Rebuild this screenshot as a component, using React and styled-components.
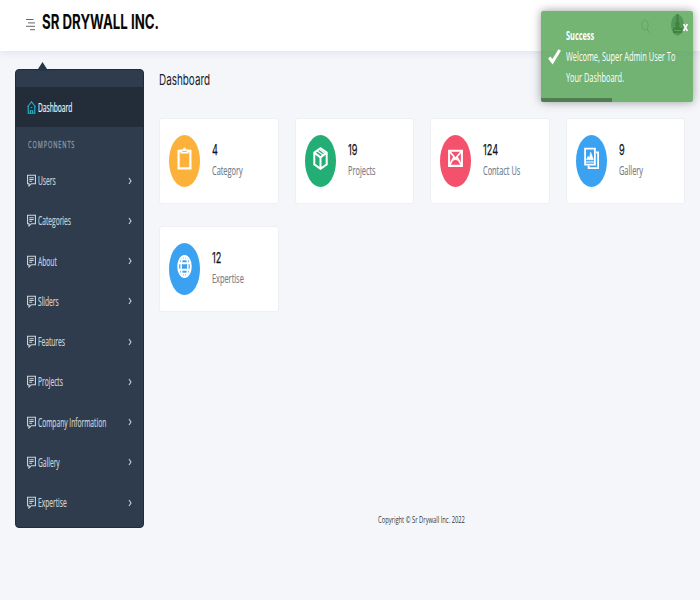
import React from 'react';
import styled, { createGlobalStyle } from 'styled-components';

const Global = createGlobalStyle`
  * { box-sizing: border-box; }
  body { margin: 0; background: #f4f6fa; font-family: "Open Sans", "Noto Sans", sans-serif; overflow: hidden; }
  svg { display: block; flex: none; }
`;

const Page = styled.div`
  width: 700px;
  height: 600px;
  position: relative;
  overflow: hidden;
  background: #f4f6fa;
`;

const Header = styled.header`
  height: 51px;
  display: flex;
  align-items: flex-start;
  padding: 0 16px 0 26px;
  background: #fff;
  box-shadow: 0 1px 8px rgba(100, 115, 190, 0.16);
`;

const MenuIcon = styled.svg`
  width: 9px;
  height: 12px;
  margin: 19px 7px 0 0;
`;

const Condensed = styled.span`
  display: block;
  white-space: nowrap;
  transform: scaleX(${(p) => p.$squeeze || 0.59});
  transform-origin: left center;
`;

const Brand = styled(Condensed)`
  font: 700 19.5px/24px Inter, sans-serif;
  color: #080808;
  margin-top: 10px;
`;

const HeaderTools = styled.div`
  margin-left: auto;
  display: flex;
  gap: 21px;
  padding-top: 14px;
`;

const Body = styled.div`
  display: flex;
  align-items: flex-start;
  padding: 18px 15px 0;
  gap: 15.5px;
`;

const Sidebar = styled.nav`
  position: relative;
  width: 128.5px;
  height: 459px;
  flex: none;
  padding-top: 17px;
  background: #2f3c4d;
  border: 1px solid #1d2c3f;
  border-radius: 4px;
`;

const Pointer = styled.svg`
  position: absolute;
  left: 19px;
  top: -8px;
  width: 15px;
  height: 9px;
`;

const MenuItem = styled.div`
  height: 40.25px;
  display: flex;
  align-items: center;
  padding: 0 11px;
  color: ${(p) => (p.$active ? '#f1f4f6' : '#cdd1d6')};
  background: ${(p) => (p.$active ? '#232d3a' : 'transparent')};
`;

const MenuLabel = styled(Condensed)`
  font-size: 12px;
  line-height: 20px;
  width: 84px;
  margin: 1px 0 0 2.3px;
  -webkit-text-stroke: 0.2px currentColor;
`;

const SectionLabel = styled(Condensed)`
  height: 33.2px;
  padding-left: 12px;
  margin-left: 4.5px;
  font-size: 9.5px;
  line-height: 36px;
  letter-spacing: 1.5px;
  color: #8d98a5;
  -webkit-text-stroke: 0.3px currentColor;
`;

const MenuGlyph = styled.svg`
  width: 9px;
  height: 13px;
`;

const Chevron = styled.svg`
  width: 4px;
  height: 8px;
  margin-left: auto;
`;

const Main = styled.main`
  width: 526px;
`;

const PageTitle = styled(Condensed)`
  font: 400 15px/22px Inter, sans-serif;
  color: #1b2028;
  height: 49px;
`;

const Cards = styled.div`
  display: grid;
  grid-template-columns: repeat(4, 119.5px);
  grid-auto-rows: 86px;
  column-gap: 16px;
  row-gap: 22px;
`;

const Card = styled.section`
  display: flex;
  align-items: center;
  gap: 12px;
  padding-left: 9px;
  min-width: 0;
  background: #fff;
  border: 1px solid #eff0f4;
  border-radius: 3px;
`;

const Disc = styled.div`
  width: 31px;
  height: 52px;
  flex: none;
  display: flex;
  justify-content: center;
  padding-top: 12px;
  border-radius: 50%;
  background: ${(p) => p.$color};
`;

const DiscGlyph = styled.svg`
  width: 15px;
  height: 23px;
`;

const Stats = styled.div`
  width: 60px;
  height: 44px;
`;

const Value = styled(Condensed)`
  font: 400 15px/22px Inter, sans-serif;
  color: #10141a;
  -webkit-text-stroke: 0.25px currentColor;
`;

const Caption = styled(Condensed)`
  font-size: 12.5px;
  line-height: 20px;
  color: #737d88;
  -webkit-text-stroke: 0.15px currentColor;
`;

const Footer = styled.footer`
  margin-left: 378px;
  margin-top: -17px;
  width: 90px;
`;

const Copyright = styled(Condensed)`
  font-size: 9.5px;
  line-height: 18px;
  color: #33383f;
`;

const Toast = styled.div`
  position: absolute;
  left: 541px;
  top: 11px;
  width: 152px;
  height: 91px;
  display: flex;
  padding: 14px 4px 0 7px;
  border-radius: 2px;
  overflow: hidden;
  color: #fff;
  background: rgba(81, 163, 81, 0.8);
  box-shadow: 0 0 10px rgba(90, 90, 90, 0.6);
`;

const Tick = styled.svg`
  width: 13px;
  height: 17px;
  margin: 23px 5px 0 0;
`;

const ToastCopy = styled.div`
  width: 119px;
`;

const ToastLine = styled(Condensed)`
  font-size: 12.5px;
  line-height: 21.2px;
  font-weight: ${(p) => (p.$bold ? 700 : 400)};
`;

const Close = styled.svg`
  position: absolute;
  right: 5px;
  top: 12px;
  width: 5px;
  height: 9px;
`;

const Progress = styled.div`
  position: absolute;
  left: 0;
  bottom: 0;
  width: 71px;
  height: 4px;
  background: rgba(0, 0, 0, 0.3);
`;

const stroked = { fill: 'none', stroke: 'currentColor', preserveAspectRatio: 'none' };

const HomeIcon = () => (
  <MenuGlyph viewBox="0 0 8 13" {...stroked} stroke="#20b5cd" strokeWidth="1">
    <path d="M.4 6 4 .8 7.6 6M1.1 5v7.3h5.8V5M3 12V9.7h2V12M3.3 6.6h1.4" />
  </MenuGlyph>
);

const CommentIcon = () => (
  <MenuGlyph viewBox="0 0 8 13" {...stroked} strokeWidth="1">
    <path d="M.5 1.2h7v8.5H3.8L1.8 12V9.7H.5z" />
    <path d="M2 3.7h4M2 5.5h4M2 7.2h2.6" strokeWidth="1.1" />
  </MenuGlyph>
);

const glyphs = {
  clipboard: (
    <>
      <path d="M1.6 3.8h11.8v17.6H1.6z" strokeWidth="2.2" />
      <path d="M3.4 6.6V2.5H6C6 .1 9 .1 9 2.5h2.6v4.1z" fill="currentColor" stroke="none" />
      <path d="M5.3 4.4h4.4" stroke="#fcb13b" strokeWidth="1" />
    </>
  ),
  box: (
    <>
      <path d="M1.3 5.6 7.5 1.2l6.2 4.4v11.8l-6.2 4.4-6.2-4.4zM1.3 5.6l6.2 4.8 6.2-4.8M7.5 10.4v11.4" strokeWidth="2" />
      <path d="m4.3 4 6 4.2M7 2.8l4.9 3.7" strokeWidth="1.2" />
    </>
  ),
  mail: (
    <>
      <path d="M1.1 3.7h12.8v15.2H1.1z" strokeWidth="2.1" />
      <path d="m1.5 4.2 6 7.3 6-7.3M1.5 18.4l4.3-8M13.5 18.4l-4.3-8" strokeWidth="1.7" />
      <path d="m5.2 10.5 4.6 2.8m0-2.8-4.6 2.8" strokeWidth="1.3" />
    </>
  ),
  gallery: (
    <>
      <path d="M1.1 1.6h9.8v16H1.1z" strokeWidth="1.8" />
      <path d="M12 5.4h2.1v15.8H4.6v-2.6" strokeWidth="1.8" />
      <path d="m2.4 12.7 1.7-3.4 1.4 1.5 1.2-5.6 2.8 7.5z" fill="currentColor" strokeWidth=".5" />
      <path d="M2 15h8" strokeWidth="1.1" />
    </>
  ),
  globe: (
    <>
      <ellipse cx="7.5" cy="11.5" rx="6.3" ry="10.6" strokeWidth="1.9" />
      <ellipse cx="7.5" cy="11.5" rx="3.4" ry="10.6" strokeWidth="1.6" />
      <path d="M1.3 8.2h12.4M1.3 14.8h12.4" strokeWidth="1.9" />
      <path d="M7.5 1v4M7.5 18v4M3 4.4h9M3 18.6h9" strokeWidth="1.5" />
    </>
  ),
};

const cards = [
  { value: '4', label: 'Category', color: '#fcb13b', icon: 'clipboard' },
  { value: '19', label: 'Projects', color: '#23ae76', icon: 'box' },
  { value: '124', label: 'Contact Us', color: '#f4516c', icon: 'mail' },
  { value: '9', label: 'Gallery', color: '#3ba2f2', icon: 'gallery' },
  { value: '12', label: 'Expertise', color: '#3ba2f2', icon: 'globe' },
];

const items = ['Users', 'Categories', 'About', 'Sliders', 'Features', 'Projects', 'Company Information', 'Gallery', 'Expertise'];

export default function App() {
  return (
    <Page>
      <Global />
      <Header>
        <MenuIcon viewBox="0 0 9 12" {...stroked} stroke="#666">
          <path d="M0 .5h7.5M2 3.9h7M0 7.3h9M4 10.7h5" />
        </MenuIcon>
        <Brand $squeeze={0.68}>SR DRYWALL INC.</Brand>
        <HeaderTools>
          <svg width="9" height="22" viewBox="0 0 9 22" fill="none" stroke="#a0a8b2">
            <ellipse cx="4" cy="11" rx="3.2" ry="5" />
            <path d="m6 15 2.5 4" />
          </svg>
          <svg width="13" height="22" viewBox="0 0 13 22">
            <ellipse cx="6.5" cy="11" rx="6.5" ry="10.5" fill="#587466" />
            <path d="M5.5 0h2v7l1.2 3-1 2.5 3.5 2v4.5H2v-4.5l3-2-1-2.5 1.5-3z" fill="#000" />
            <path d="M3 16.5h7" stroke="#8fa497" />
          </svg>
        </HeaderTools>
      </Header>
      <Body>
        <Sidebar>
          <Pointer viewBox="0 0 15 9"><path d="M0 9 3 7 7.5 0 12 7l3 2z" fill="#26364a" /></Pointer>
          <MenuItem $active><HomeIcon /><MenuLabel $squeeze={0.555}>Dashboard</MenuLabel></MenuItem>
          <SectionLabel>COMPONENTS</SectionLabel>
          {items.map((label) => (
            <MenuItem key={label}>
              <CommentIcon />
              <MenuLabel $squeeze={0.555}>{label}</MenuLabel>
              <Chevron viewBox="0 0 4 8" {...stroked} strokeWidth="1.1"><path d="m1 1 2 3-2 3" /></Chevron>
            </MenuItem>
          ))}
        </Sidebar>
        <Main>
          <PageTitle $squeeze={0.66}>Dashboard</PageTitle>
          <Cards>
            {cards.map((c) => (
              <Card key={c.label}>
                <Disc $color={c.color}>
                  <DiscGlyph viewBox="0 0 15 23" {...stroked} color="#fff">{glyphs[c.icon]}</DiscGlyph>
                </Disc>
                <Stats>
                  <Value $squeeze={0.61}>{c.value}</Value>
                  <Caption>{c.label}</Caption>
                </Stats>
              </Card>
            ))}
          </Cards>
        </Main>
      </Body>
      <Footer><Copyright $squeeze={0.61}>Copyright © Sr Drywall Inc. 2022</Copyright></Footer>
      <Toast>
        <Tick viewBox="0 0 13 17" {...stroked} strokeWidth="3"><path d="m1.3 9.5 3.2 4.3L11.7 2" /></Tick>
        <ToastCopy>
          <ToastLine $bold>Success</ToastLine>
          <ToastLine $squeeze={0.595}>Welcome, Super Admin User To</ToastLine>
          <ToastLine>Your Dashboard.</ToastLine>
        </ToastCopy>
        <Close viewBox="0 0 5 9" {...stroked} strokeWidth="1.6"><path d="m.7 1 3.6 7M4.3 1 .7 8" /></Close>
        <Progress />
      </Toast>
    </Page>
  );
}
